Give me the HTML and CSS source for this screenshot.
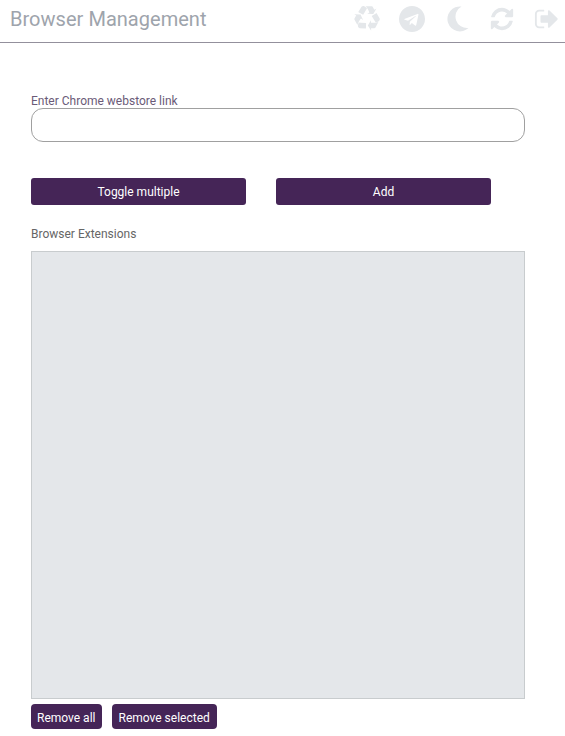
FILE: index.html
```html
<!DOCTYPE html>
<html lang="en">
<head>
  <meta charset="UTF-8" />
  <title>Browser Management</title>
  <link rel="stylesheet" href="styles.css">
</head>
<body>
  <header class="topbar">
    <h1>Browser Management</h1>
    <div class="icons">
      <svg class="icon" viewBox="0 0 1792 1792"><path d="M836 1169l-15 368-2 22-420-29q-36-3-67-31.5t-47-65.5q-11-27-14.5-55t4-65 12-55 21.5-64 19-53q78 12 509 28zm-387-586l180 379-147-92q-63 72-111.5 144.5t-72.5 125-39.5 94.5-18.5 63l-4 21-190-357q-17-26-18-56t6-47l8-18q35-63 114-188l-140-86zm1231 517l-188 359q-12 29-36.5 46.5t-43.5 20.5l-18 4q-71 7-219 12l8 164-230-367 211-362 7 173q170 16 283 5t170-33zm-785-924q-47 63-265 435l-317-187-19-12 225-356q20-31 60-45t80-10q24 2 48.5 12t42 21 41.5 33 36 34.5 36 39.5 32 35zm655 307l212 363q18 37 12.5 76t-27.5 74q-13 20-33 37t-38 28-48.5 22-47 16-51.5 14-46 12q-34-72-265-436l313-195zm-143-226l142-83-220 373-419-20 151-86q-34-89-75-166t-75.5-123.5-64.5-80-47-46.5l-17-13 405 1q31-3 58 10.5t39 28.5l11 15q39 61 112 190z"/></svg>
      <svg class="icon" viewBox="0 0 1792 1792"><path d="M1189 1307l147-693q9-44-10.5-63t-51.5-7l-864 333q-29 11-39.5 25t-2.5 26.5 32 19.5l221 69 513-323q21-14 32-6 7 5-4 15l-415 375-16 228q23 0 45-22l108-104 224 165q64 36 81-38zm603-411q0 182-71 348t-191 286-286 191-348 71-348-71-286-191-191-286-71-348 71-348 191-286 286-191 348-71 348 71 286 191 191 286 71 348z"/></svg>
      <svg class="icon" viewBox="0 0 26 26"><path d="M17.5 0.5A12.5 12.5 0 1 0 24.5 22A11.5 11.5 0 0 1 17.5 0.5Z"/></svg>
      <svg class="icon" viewBox="0 0 1792 1792"><path d="M1639 1056q0 5-1 7-64 268-268 434.5t-478 166.5q-146 0-282.5-55t-243.5-157l-129 129q-19 19-45 19t-45-19-19-45v-448q0-26 19-45t45-19h448q26 0 45 19t19 45-19 45l-137 137q71 66 161 102t187 36q134 0 250-65t186-179q11-17 53-117 8-23 30-23h192q13 0 22.5 9.5t9.5 22.5zm25-800v448q0 26-19 45t-45 19h-448q-26 0-45-19t-19-45 19-45l138-138q-148-137-349-137-134 0-250 65t-186 179q-11 17-53 117-8 23-30 23h-199q-13 0-22.5-9.5t-9.5-22.5v-7q65-268 270-434.5t480-166.5q146 0 284 55.5t245 156.5l130-129q19-19 45-19t45 19 19 45z"/></svg>
      <svg class="icon" viewBox="0 0 1792 1792"><path d="M704 1440q0 4 1 20t.5 26.5-3 23.5-10 19.5-20.5 6.5h-320q-119 0-203.5-84.5t-84.5-203.5v-704q0-119 84.5-203.5t203.5-84.5h320q13 0 22.5 9.5t9.5 22.5q0 4 1 20t.5 26.5-3 23.5-10 19.5-20.5 6.5h-320q-66 0-113 47t-47 113v704q0 66 47 113t113 47h312l11.5 1 11.5 3 8 5.5 7 9 2 13.5zm928-544q0 26-19 45l-544 544q-19 19-45 19t-45-19-19-45v-288h-448q-26 0-45-19t-19-45v-384q0-26 19-45t45-19h448v-288q0-26 19-45t45-19 45 19l544 544q19 19 19 45z"/></svg>
    </div>
  </header>

  <main class="content">
    <label class="link-label" for="link">Enter Chrome webstore link</label>
    <input class="link-input" id="link" type="text" />

    <div class="actions">
      <button class="btn btn-wide">Toggle multiple</button>
      <button class="btn btn-wide">Add</button>
    </div>

    <div class="list-label">Browser Extensions</div>
    <div class="list"></div>

    <div class="remove-row">
      <button class="btn btn-small">Remove all</button>
      <button class="btn btn-small">Remove selected</button>
    </div>
  </main>
</body>
</html>
```

FILE: styles.css
```css
body {
  font-family: Roboto, "Liberation Sans", sans-serif;
  margin: 0;
  padding: 0;
  background: #fff;
  color: #666;
}
.topbar {
  display: flex;
  align-items: center;
  justify-content: space-between;
  padding: 0 5px 5px 10px;
  height: 37px;
  border-bottom: 1px solid #93909c;
}
.topbar h1 {
  margin: 0;
  font-size: 20px;
  font-weight: 400;
  letter-spacing: 0.03px;
  color: #9ea4ac;
}
.icons { display: flex; align-items: center; gap: 19px; }
.icon { width: 26px; height: 26px; fill: #e4e7ea; }
.content {
  padding: 52px 40px 0 31px;
  font-size: 12px;
}
.link-label {
  display: block;
  height: 13px;
  line-height: 13px;
  color: #6b5b78;
}
.link-input {
  display: block;
  width: 100%;
  height: 34px;
  padding: 0 10px;
  border: 1px solid #a0a0a0;
  border-radius: 12px;
  box-sizing: border-box;
  background: #fff;
}
.actions {
  display: flex;
  gap: 30px;
  margin-top: 36px;
}
.btn {
  border: none;
  border-radius: 3px;
  background: #452557;
  color: #fff;
  font-family: inherit;
  font-size: 12px;
  cursor: pointer;
}
.btn-wide { width: 215px; height: 27px; }
.list-label {
  margin-top: 22px;
  line-height: 14px;
  color: #666;
}
.list {
  margin-top: 10px;
  height: 448px;
  background: #e4e7ea;
  border: 1px solid #c8ccce;
  box-sizing: border-box;
}
.remove-row {
  display: flex;
  gap: 10px;
  margin-top: 5px;
}
.btn-small { height: 25px; padding: 2px 7px 0 6px; border-radius: 4px; }
```
